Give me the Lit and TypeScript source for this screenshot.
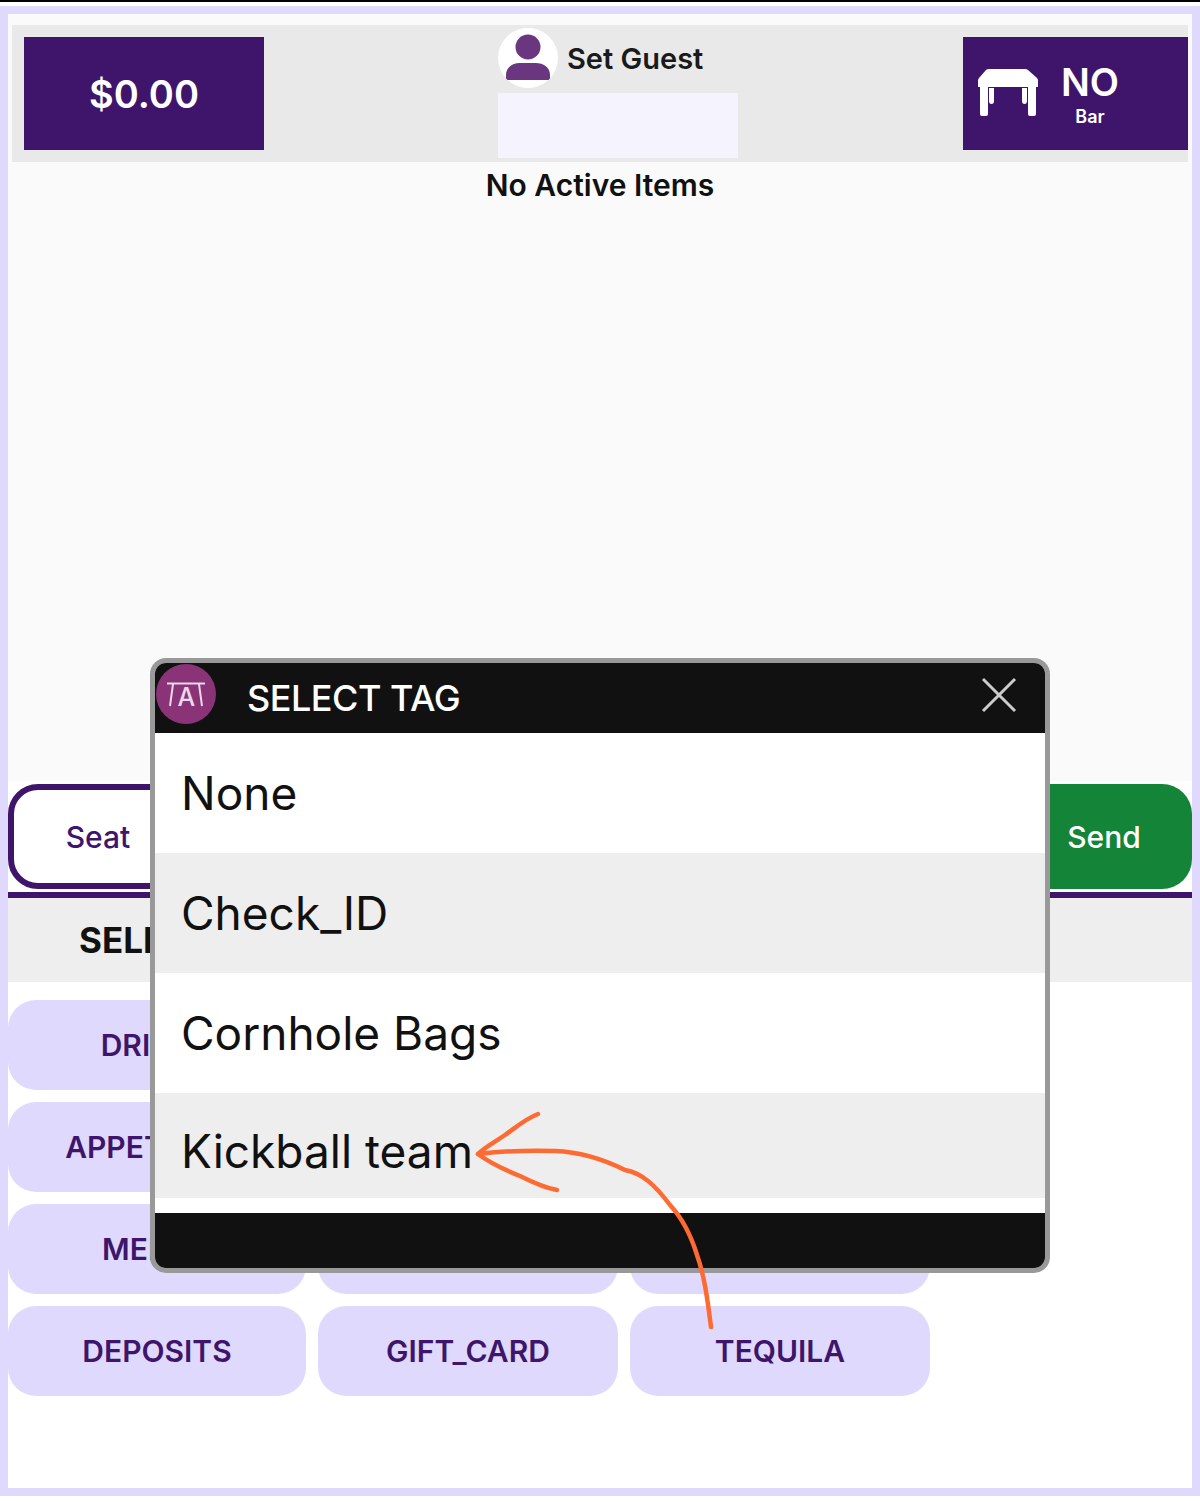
import { LitElement, html, css } from "lit";
import { customElement } from "lit/decorators.js";

const CATS = ["DRINKS", "", "", "APPETIZERS", "", "", "MERCH", "", "", "DEPOSITS", "GIFT_CARD", "TEQUILA"];

@customElement("app-root")
export class AppRoot extends LitElement {
  static styles = css`
    :host { display: block; position: relative; width: 1200px; height: 1504px; background: #fff; overflow: hidden; font-family: Inter, "Liberation Sans", sans-serif; color: #111; }
    .strip { height: 2px; background: #000; margin-bottom: 4px; }
    .frame { box-sizing: border-box; height: 1490px; border: 8px solid #dfdafd; display: flex; flex-direction: column; background: #fff; }
    .items { height: 767px; background: #fafafa; padding: 11px 4px 0; box-sizing: border-box; display: flex; flex-direction: column; align-items: stretch; flex: none; }
    .head { height: 137px; background: #e9e9e9; display: flex; padding-left: 12px; flex: none; }
    .block { background: #3f156c; color: #fff; margin-top: 12px; height: 113px; }
    .total { width: 240px; display: flex; align-items: center; justify-content: center; font-size: 38px; font-weight: 600; }
    .guest { width: 240px; margin-left: 234px; padding-top: 3px; display: flex; flex-direction: column; gap: 5px; }
    .guest-top { display: flex; align-items: center; gap: 9px; font-size: 29px; font-weight: 600; color: #1a1a1a; height: 60px; }
    .avatar { width: 60px; height: 60px; border-radius: 50%; background: #fff; flex: none; display: block; }
    .guest-box { height: 65px; background: #f5f3fe; }
    .table { width: 225px; margin-left: auto; display: flex; align-items: center; box-sizing: border-box; padding-left: 15px; }
    .table-svg { width: 60px; height: 48px; display: block; margin-top: -2px; }
    .table-text { width: 104px; display: flex; flex-direction: column; align-items: center; margin-left: 0; }
    .no { font-size: 38px; font-weight: 600; line-height: 46px; }
    .bar { font-size: 18px; font-weight: 600; line-height: 24px; }
    .empty { text-align: center; font-size: 30px; font-weight: 600; line-height: 46px; }
    .actions { height: 111px; flex: none; background: #fff; display: flex; justify-content: space-between; padding-top: 3px; box-sizing: border-box; }
    .btn { box-sizing: border-box; height: 105px; width: 180px; border-radius: 30px; display: flex; align-items: center; justify-content: center; font-size: 30px; font-weight: 500; }
    .seat { border: 6px solid #3f156c; color: #3f156c; background: #fff; }
    .send { background: #148438; color: #fff; width: 176px; }
    .rule { height: 6px; background: #3f156c; flex: none; }
    .band { height: 84px; background: #eee; flex: none; display: flex; align-items: center; padding-left: 71px; font-size: 35px; font-weight: 700; }
    .grid { display: grid; grid-template-columns: 298px 300px 300px; grid-auto-rows: 90px; gap: 12px; padding-top: 18px; }
    .cat { background: #dfdafd; border-radius: 28px; display: flex; align-items: center; justify-content: center; color: #3f156c; font-size: 30px; font-weight: 600; }
    .modal { position: absolute; left: 150px; top: 658px; width: 900px; height: 615px; box-sizing: border-box; border: 5px solid #999; border-radius: 16px; background: #fff; overflow: hidden; display: flex; flex-direction: column; }
    .m-head { height: 70px; background: #111; color: #fff; flex: none; position: relative; display: flex; align-items: center; padding-left: 92px; font-size: 36px; font-weight: 500; letter-spacing: -0.5px; }
    .logo { position: absolute; left: 1px; top: 1px; width: 60px; height: 60px; display: block; }
    .logo-a { font: 500 25px Inter, "Liberation Sans", sans-serif; fill: #ecd8ec; }
    .close { position: absolute; right: 28px; top: 14px; width: 36px; height: 36px; display: block; }
    .row { height: 120px; flex: none; display: flex; align-items: center; padding-left: 26px; font-size: 46px; font-weight: 400; color: #111; box-sizing: border-box; }
    .alt { background: #eee; }
    .cut { height: 105px; padding-bottom: 0; align-items: flex-start; padding-top: 30px; margin-bottom: 15px; line-height: 56px; }
    .m-foot { flex: 1; background: #111; }
    .arrow { position: absolute; left: 0; top: 0; width: 1200px; height: 1504px; pointer-events: none; display: block; }
  `;

  render() {
    return html`
      <div class="strip"></div>
      <div class="frame">
        <div class="items">
          <div class="head">
            <div class="block total">$0.00</div>
            <div class="guest">
              <div class="guest-top">
                <svg class="avatar" viewBox="0 0 60 60">
                  <circle cx="30" cy="19" r="12.5" fill="#6b3680"></circle>
                  <path d="M8 52 V47 C8 39 15 35 22 35 H38 C45 35 52 39 52 47 V52 Z" fill="#6b3680"></path>
                </svg>
                <span>Set Guest</span>
              </div>
              <div class="guest-box"></div>
            </div>
            <div class="block table">
              <svg class="table-svg" viewBox="0 0 60 48">
                <path fill="#fff" d="M8 1 Q9 0 11 0 H47 Q49 0 50 1 L59 9 Q60 10 60 12 V18 H58 V45 Q58 47 56 47 H52 Q50 47 50 45 V18 H10 V45 Q10 47 8 47 H4 Q2 47 2 45 V18 H0 V12 Q0 10 1 9 Z"></path>
                <path fill="#fff" d="M11 19 H16 V32 Q16 35 13.500 35 Q11 35 11 32 Z M44 19 H49 V32 Q49 35 46.500 35 Q44 35 44 32 Z"></path>
              </svg>
              <div class="table-text"><span class="no">NO</span><span class="bar">Bar</span></div>
            </div>
          </div>
          <div class="empty">No Active Items</div>
        </div>
        <div class="actions">
          <div class="btn seat">Seat</div>
          <div class="btn send">Send</div>
        </div>
        <div class="rule"></div>
        <div class="band">SELECT</div>
        <div class="grid">
          ${CATS.map((c) => html`<div class="cat">${c}</div>`)}
        </div>
      </div>
      <div class="modal">
        <div class="m-head">
          <svg class="logo" viewBox="0 0 60 60">
            <circle cx="30" cy="30" r="30" fill="#8a3377"></circle>
            <path d="M11 19.500 H49 M17 20 L14 42 M43 20 L46 42" stroke="#ecd8ec" stroke-width="2" fill="none"></path>
            <text class="logo-a" x="30" y="42" text-anchor="middle">A</text>
          </svg>
          SELECT TAG
          <svg class="close" viewBox="0 0 36 36">
            <path d="M2 2 L34 34 M34 2 L2 34" stroke="#ccc" stroke-width="3" fill="none"></path>
          </svg>
        </div>
        <div class="row">None</div>
        <div class="row alt">Check_ID</div>
        <div class="row">Cornhole Bags</div>
        <div class="row alt cut">Kickball team</div>
        <div class="m-foot"></div>
      </div>
      <svg class="arrow" viewBox="0 0 1200 1504">
        <path d="M711 1327 C707 1295 704 1275 697 1255 C690 1232 682 1218 670 1205 C655 1185 642 1173 625 1170 C605 1160 580 1152 555 1151 C530 1150 505 1151 478 1154" fill="none" stroke="#ff6a33" stroke-width="4.500" stroke-linecap="round" stroke-linejoin="round"></path>
        <path d="M538 1114 C525 1119 515 1128 505 1135 C495 1142 485 1147 478 1154 C490 1163 505 1170 520 1176 C532 1182 545 1188 557 1190" fill="none" stroke="#ff6a33" stroke-width="4.500" stroke-linecap="round" stroke-linejoin="round"></path>
      </svg>
    `;
  }
}
